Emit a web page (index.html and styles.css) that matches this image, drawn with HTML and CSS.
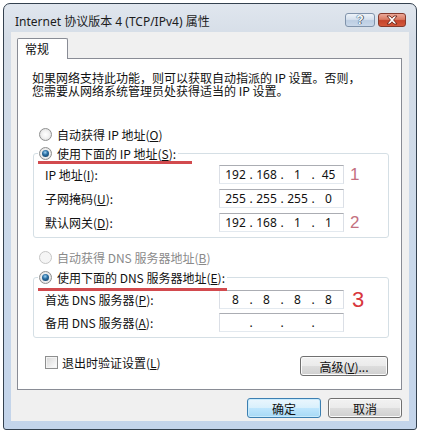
FILE: index.html
```html
<!DOCTYPE html>
<html lang="zh-CN">
<head>
<meta charset="utf-8">
<title>Internet 协议版本 4 (TCP/IPv4) 属性</title>
<link rel="stylesheet" href="styles.css">
</head>
<body>
<div class="window">
  <div class="titlebar">
    <span class="title">Internet 协议版本 4 (TCP/IPv4) 属性</span>
    <div class="caption-buttons">
      <span class="cap-btn help">?</span>
      <span class="cap-btn close">
        <svg width="14" height="10" viewBox="0 0 14 10"><path d="M2 1 L5 1 L7 3.2 L9 1 L12 1 L8.6 5 L12 9 L9 9 L7 6.8 L5 9 L2 9 L5.4 5 Z" fill="#fff" stroke="#6b2418" stroke-width="0.9" stroke-linejoin="round"/></svg>
      </span>
    </div>
  </div>
  <div class="client">
    <div class="tabs"><div class="tab">常规</div></div>
    <div class="panel">
      <p class="desc"><span class="line">如果网络支持此功能，则可以获取自动指派的 IP 设置。否则，</span><span class="line">您需要从网络系统管理员处获得适当的 IP 设置。</span></p>

      <div class="radio-row ip-auto"><span class="radio"></span><span>自动获得 IP 地址(<u>O</u>)</span></div>
      <fieldset class="group group-ip">
        <legend><span class="radio checked"></span><span>使用下面的 IP 地址(<u>S</u>):</span><span class="mark mark-ip"></span></legend>
        <div class="row">
          <span class="lbl">IP 地址(<u>I</u>):</span>
          <div class="ipbox"><span class="oct">192</span><span class="dot">.</span><span class="oct">168</span><span class="dot">.</span><span class="oct">1</span><span class="dot">.</span><span class="oct">45</span></div>
          <span class="note">1</span>
        </div>
        <div class="row">
          <span class="lbl">子网掩码(<u>U</u>):</span>
          <div class="ipbox"><span class="oct">255</span><span class="dot">.</span><span class="oct">255</span><span class="dot">.</span><span class="oct">255</span><span class="dot">.</span><span class="oct">0</span></div>
        </div>
        <div class="row">
          <span class="lbl">默认网关(<u>D</u>):</span>
          <div class="ipbox"><span class="oct">192</span><span class="dot">.</span><span class="oct">168</span><span class="dot">.</span><span class="oct">1</span><span class="dot">.</span><span class="oct">1</span></div>
          <span class="note">2</span>
        </div>
      </fieldset>

      <div class="radio-row dns-auto disabled"><span class="radio"></span><span>自动获得 DNS 服务器地址(<u>B</u>)</span></div>
      <fieldset class="group group-dns">
        <legend><span class="radio checked"></span><span>使用下面的 DNS 服务器地址(<u>E</u>):</span><span class="mark mark-dns"></span></legend>
        <div class="row">
          <span class="lbl">首选 DNS 服务器(<u>P</u>):</span>
          <div class="ipbox"><span class="oct">8</span><span class="dot">.</span><span class="oct">8</span><span class="dot">.</span><span class="oct">8</span><span class="dot">.</span><span class="oct">8</span></div>
          <span class="note big">3</span>
        </div>
        <div class="row">
          <span class="lbl">备用 DNS 服务器(<u>A</u>):</span>
          <div class="ipbox"><span class="oct"></span><span class="dot">.</span><span class="oct"></span><span class="dot">.</span><span class="oct"></span><span class="dot">.</span><span class="oct"></span></div>
        </div>
      </fieldset>

      <div class="bottom-row">
        <div class="check-row"><span class="checkbox"></span><span>退出时验证设置(<u>L</u>)</span></div>
        <button class="btn advanced">高级(<u>V</u>)...</button>
      </div>
    </div>
    <div class="dlg-buttons">
      <button class="btn default">确定</button>
      <button class="btn">取消</button>
    </div>
  </div>
</div>
</body>
</html>
```
FILE: styles.css
```css
* { box-sizing: border-box; }

html, body {
  margin: 0;
  padding: 0;
  background: #ffffff;
  overflow: hidden;
}

body {
  padding: 3px 0 0 3px;
  font-family: "Noto Sans CJK SC", sans-serif;
  font-size: 12px;
  color: #111;
}

u { text-decoration: underline; text-underline-offset: 1px; }

.window {
  width: 414px;
  height: 427px;
  border: 1px solid #34414f;
  border-radius: 7px 7px 3px 3px;
  background: linear-gradient(#e0e6ee 0%, #d5dde7 8%, #c9d8ea 60%, #c3d4ea 100%);
  display: flex;
  flex-direction: column;
}

.titlebar {
  height: 28px;
  flex: none;
  display: flex;
  align-items: flex-start;
  justify-content: space-between;
  padding: 9px 10px 0 11px;
}

.title {
  font-family: "Noto Sans", "Noto Sans CJK SC", sans-serif;
  font-size: 12px;
  line-height: 17px;
  color: #1c1c1c;
}

.caption-buttons {
  display: flex;
  gap: 3px;
}

.cap-btn {
  height: 14px;
  border-radius: 3px;
  display: flex;
  align-items: center;
  justify-content: center;
}

.cap-btn.help {
  width: 30px;
  border: 1px solid #8093ab;
  background: linear-gradient(#eef3f9 0%, #d6e1ee 45%, #bccde2 55%, #c9d8ea 100%);
  color: #ffffff;
  font-family: "Liberation Sans", sans-serif;
  font-weight: bold;
  font-size: 12px;
  line-height: 12px;
  text-shadow: 0 0 1px #33475e, 0 0 1px #33475e, 1px 0 0 #5a6d84;
}

.cap-btn.close {
  width: 28px;
  border: 1px solid #84392c;
  background: linear-gradient(#eba898 0%, #d97a62 45%, #c4442c 55%, #d4583b 100%);
}

.client {
  flex: none;
  margin: 0 7px;
  padding: 6px 7px 3px 6px;
  background: #f0f0f0;
}

.tabs {
  display: flex;
  position: relative;
  z-index: 1;
  margin-bottom: -1px;
}

.tab {
  width: 51px;
  height: 21px;
  padding-left: 7px;
  border: 1px solid #898c95;
  border-bottom: none;
  background: #ffffff;
  line-height: 19px;
  border-radius: 2px 2px 0 0;
}

.panel {
  height: 332px;
  border: 1px solid #898c95;
  background: #ffffff;
  padding-top: 12px;
}

.desc {
  margin: 0 0 0 14px;
  display: flex;
  flex-direction: column;
}

.desc .line {
  display: block;
  height: 13px;
  line-height: 13px;
}

.radio-row {
  display: flex;
  align-items: center;
  gap: 5px;
  height: 16px;
  margin-left: 21px;
}

.ip-auto { margin-top: 29px; }
.dns-auto { margin-top: 11px; }
.disabled { color: #8a8a8a; }

.radio {
  flex: none;
  position: relative;
  width: 13px;
  height: 13px;
  border-radius: 50%;
  border: 1px solid #8e8f8f;
  background: radial-gradient(circle at 50% 50%, #ffffff 0%, #f2f2f2 45%, #d4d4d4 100%);
}

.radio.checked::after {
  content: "";
  position: absolute;
  left: 2px;
  top: 2px;
  width: 7px;
  height: 7px;
  border-radius: 50%;
  background: radial-gradient(circle at 45% 35%, #9fd2f4 0%, #2a6fa3 40%, #103454 100%);
}

.disabled .radio {
  border-color: #c6c6c6;
  background: #f5f5f5;
}

.group {
  width: 356px;
  margin: 3px 0 0 15px;
  padding: 4px 10px 5px 11px;
  border: 1px solid #d5dfe5;
  border-radius: 3px;
  min-width: 0;
}

.group-dns {
  margin-top: 4px;
  padding-top: 5px;
}

.group legend {
  position: relative;
  display: flex;
  align-items: center;
  gap: 5px;
  height: 16px;
  margin-left: -7px;
  padding: 0 2px 0 1px;
}

.mark {
  position: absolute;
  left: 0;
  height: 3px;
  background: #d24a4e;
}

.mark-ip { top: 16px; width: 154px; }
.mark-dns { top: 19px; width: 189px; }

.row {
  display: flex;
  align-items: center;
  height: 19px;
}

.row + .row { margin-top: 5px; }
.group-dns .row + .row { margin-top: 4px; }

.lbl {
  width: 174px;
  flex: none;
  line-height: 16px;
}

.ipbox {
  width: 125px;
  height: 19px;
  flex: none;
  display: flex;
  padding-left: 2px;
  border: 1px solid #dbdfe6;
  border-top-color: #abadb3;
  border-bottom-color: #e3e9ef;
  background: #ffffff;
  font-family: "Noto Sans", sans-serif;
  font-size: 12px;
  line-height: 17px;
  color: #111;
}

.oct {
  width: 27px;
  text-align: center;
}

.dot {
  width: 4px;
  text-align: center;
}

.note {
  margin-left: 6px;
  font-family: "Liberation Sans", sans-serif;
  font-size: 17px;
  line-height: 19px;
  color: #c3707f;
}

.note.big {
  margin-left: 8px;
  font-size: 22px;
  color: #d8363d;
}

.bottom-row {
  display: flex;
  justify-content: space-between;
  align-items: flex-start;
  margin: 18px 13px 0 27px;
}

.check-row {
  display: flex;
  align-items: center;
  gap: 4px;
  height: 16px;
  margin-top: -2px;
}

.checkbox {
  flex: none;
  width: 13px;
  height: 13px;
  border: 1px solid #8e8f8f;
  background: linear-gradient(135deg, #d6d6d6 0%, #f3f3f3 70%, #ffffff 100%);
  box-shadow: inset 0 0 0 1px #f4f4f4;
}

.btn {
  height: 20px;
  margin: 0;
  padding: 0;
  border: 1px solid #707070;
  border-radius: 3px;
  background: linear-gradient(#f2f2f2 0%, #ebebeb 48%, #dddddd 52%, #cfcfcf 100%);
  box-shadow: inset 0 0 0 1px #fbfbfb;
  font-family: "Noto Sans CJK SC", sans-serif;
  font-size: 12px;
  line-height: 17px;
  color: #111;
}

.btn.advanced { width: 88px; }

.btn.default {
  border-color: #3c7fb1;
  background: linear-gradient(#eaf6fd 0%, #d9f0fc 48%, #bee6fd 52%, #a7d9f5 100%);
  box-shadow: inset 0 0 0 1px #c8ebfd;
}

.dlg-buttons {
  display: flex;
  justify-content: flex-end;
  gap: 7px;
  margin-top: 8px;
}

.dlg-buttons .btn { width: 74px; }
```
